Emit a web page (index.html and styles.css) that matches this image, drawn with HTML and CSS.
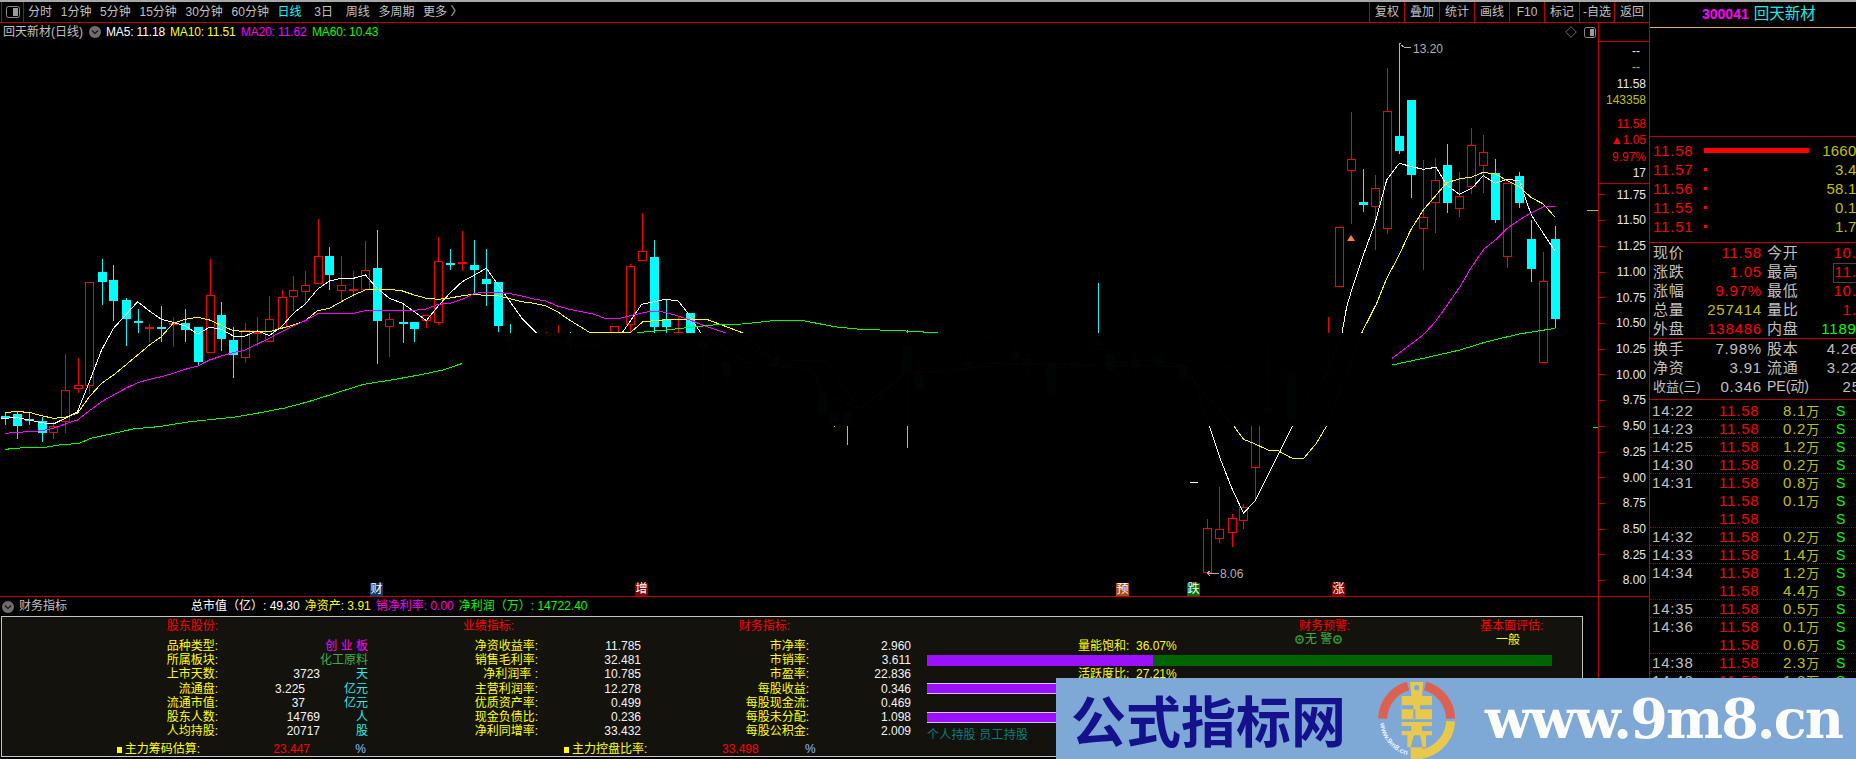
FILE: index.html
```html
<!DOCTYPE html>
<html lang="zh">
<head>
<meta charset="utf-8">
<title>回天新材</title>
<link rel="stylesheet" href="styles.css">
</head>
<body>
<div class="app">
  <div class="topline"></div>
  <div class="main">
    <div class="left">
      <div class="toolbar">
        <div class="tool-icon">
          <svg width="14" height="12" viewBox="0 0 14 12"><rect x="0.5" y="0.5" width="13" height="11" rx="2" fill="none" stroke="#8c8c8c"/><rect x="7" y="2" width="5" height="8" fill="#9a9a9a"/></svg>
        </div>
        <nav class="periods">
          <span>分时</span><span>1分钟</span><span>5分钟</span><span>15分钟</span><span>30分钟</span><span>60分钟</span><span class="active">日线</span><span class="wide">3日</span><span class="wide">周线</span><span>多周期</span><span>更多 〉</span>
        </nav>
        <div class="actions">
          <span>复权</span><span>叠加</span><span>统计</span><span>画线</span><span>F10</span><span>标记</span><span>-自选</span><span>返回</span>
        </div>
      </div>
      <div class="mid">
        <div class="chart-col">
          <div class="chart-head">
            <span class="stock-label">回天新材(日线)</span>
            <svg class="round" width="12" height="12" viewBox="0 0 12 12"><circle cx="6" cy="6" r="6" fill="#6e6e6e"/><path d="M3 4.5 6 7.5 9 4.5" fill="none" stroke="#1c1c1c" stroke-width="1.5"/></svg>
            <span class="ma white">MA5: 11.18</span>
            <span class="ma yellow">MA10: 11.51</span>
            <span class="ma magenta">MA20: 11.62</span>
            <span class="ma green">MA60: 10.43</span>
            <span class="head-gap"></span>
            <svg width="12" height="12" viewBox="0 0 12 12"><path d="M6 .7 11.3 6 6 11.3 .7 6Z" fill="none" stroke="#6a6a6a"/></svg>
            <svg width="12" height="11" viewBox="0 0 12 11"><rect x="0.5" y="0.5" width="11" height="10" rx="2" fill="none" stroke="#8c8c8c"/><rect x="6" y="2" width="4" height="7" fill="#9a9a9a"/></svg>
          </div>
          <div class="plot">
            <svg id="kline" class="kline" width="1598" height="555" viewBox="0 41 1598 555"></svg>
            <span class="tag tag-cai">财</span>
            <span class="tag tag-zeng">增</span>
            <span class="tag tag-yu">预</span>
            <span class="tag tag-die">跌</span>
            <span class="tag tag-zhang">涨</span>
          </div>
        </div>
        <div class="axis">
          <div class="axis-top"></div>
          <div class="readout">
            <div class="dash white-soft">--</div>
            <div class="dash olive">--</div>
            <div class="white-soft">11.58</div>
            <div class="olive">143358</div>
            <div class="red spaced">11.58</div>
            <div class="red">▲1.05</div>
            <div class="red">9.97%</div>
            <div class="white-soft">17</div>
          </div>
          <div class="scale">
            <div class="tick"><i></i><b>11.75</b></div>
            <div class="tick"><i></i><b>11.50</b></div>
            <div class="tick"><i></i><b>11.25</b></div>
            <div class="tick"><i></i><b>11.00</b></div>
            <div class="tick"><i></i><b>10.75</b></div>
            <div class="tick"><i></i><b>10.50</b></div>
            <div class="tick"><i></i><b>10.25</b></div>
            <div class="tick"><i></i><b>10.00</b></div>
            <div class="tick"><i></i><b>9.75</b></div>
            <div class="tick"><i></i><b>9.50</b></div>
            <div class="tick"><i></i><b>9.25</b></div>
            <div class="tick"><i></i><b>9.00</b></div>
            <div class="tick"><i></i><b>8.75</b></div>
            <div class="tick"><i></i><b>8.50</b></div>
            <div class="tick"><i></i><b>8.25</b></div>
            <div class="tick"><i></i><b>8.00</b></div>
          </div>
        </div>
      </div>
      <div class="lower">
        <div class="fin-col">
          <div class="fin-head">
            <svg class="round" width="12" height="12" viewBox="0 0 12 12"><circle cx="6" cy="6" r="6" fill="#6e6e6e"/><path d="M3 4.5 6 7.5 9 4.5" fill="none" stroke="#1c1c1c" stroke-width="1.5"/></svg>
            <span class="fin-title">财务指标</span>
            <span class="white">总市值（亿）: 49.30</span>
            <span class="yellow">净资产: 3.91</span>
            <span class="magenta">销净利率: 0.00</span>
            <span class="green">净利润（万）: 14722.40</span>
          </div>
          <div class="panel">
            <div class="fin-left">
              <div class="frow heads">
                <span class="lab red">股东股份:</span><span></span><span></span>
                <span class="lab red h2">业绩指标:</span><span></span>
                <span class="lab red h3">财务指标:</span><span></span>
              </div>
              <div class="frow">
                <span class="lab">品种类型:</span><span class="val"></span><span class="unit magenta nowrap">创 业 板</span>
                <span class="lab">净资收益率:</span><span class="val">11.785</span>
                <span class="lab">市净率:</span><span class="val">2.960</span>
              </div>
              <div class="frow">
                <span class="lab">所属板块:</span><span class="val"></span><span class="unit leaf nowrap">化工原料</span>
                <span class="lab">销售毛利率:</span><span class="val">32.481</span>
                <span class="lab">市销率:</span><span class="val">3.611</span>
              </div>
              <div class="frow">
                <span class="lab">上市天数:</span><span class="val">3723</span><span class="unit cyan">天</span>
                <span class="lab">净利润率 :</span><span class="val">10.785</span>
                <span class="lab">市盈率:</span><span class="val">22.836</span>
              </div>
              <div class="frow">
                <span class="lab">流通盘:</span><span class="val short">3.225</span><span class="unit cyan">亿元</span>
                <span class="lab">主营利润率:</span><span class="val">12.278</span>
                <span class="lab">每股收益:</span><span class="val">0.346</span>
              </div>
              <div class="frow">
                <span class="lab">流通市值:</span><span class="val short">37</span><span class="unit cyan">亿元</span>
                <span class="lab">优质资产率:</span><span class="val">0.499</span>
                <span class="lab">每股现金流:</span><span class="val">0.469</span>
              </div>
              <div class="frow">
                <span class="lab">股东人数:</span><span class="val">14769</span><span class="unit cyan">人</span>
                <span class="lab">现金负债比:</span><span class="val">0.236</span>
                <span class="lab">每股未分配:</span><span class="val">1.098</span>
              </div>
              <div class="frow">
                <span class="lab">人均持股:</span><span class="val">20717</span><span class="unit cyan">股</span>
                <span class="lab">净利同增率:</span><span class="val">33.432</span>
                <span class="lab">每股公积金:</span><span class="val">2.009</span>
              </div>
              <div class="frow total">
                <span class="lab t-lab"><i class="sq"></i>主力筹码估算:</span><span class="val t-val red">23.447</span><span class="unit t-pct sky">%</span>
                <span></span><span class="t-lab2 yellow"><i class="sq"></i>主力控盘比率:</span>
                <span class="t-val2 red">33.498</span><span class="t-pct2 sky">%</span>
              </div>
            </div>
            <div class="fin-right">
              <div class="fr-top">
                <div class="alert">
                  <div class="red cap">财务预警:</div>
                  <div class="status leaf"><i class="ring"></i>无 警<i class="ring"></i></div>
                </div>
                <div class="evaluate">
                  <div class="red cap">基本面评估:</div>
                  <div class="grade yellow">一般</div>
                </div>
              </div>
              <div class="mrow"><span class="yellow mlabel">量能饱和:&nbsp;&nbsp;36.07%</span></div>
              <div class="mrow"><div class="meter"><div class="fill fill-a"></div></div></div>
              <div class="mrow"><span class="yellow mlabel">活跃度比:&nbsp;&nbsp;27.21%</span></div>
              <div class="mrow"><div class="meter edged"><div class="fill fill-b"></div></div></div>
              <div class="mrow"></div>
              <div class="mrow"><div class="meter edged"><div class="fill fill-c"></div></div></div>
              <div class="mrow"><span class="teal holders">个人持股 员工持股</span></div>
            </div>
          </div>
        </div>
        <div class="axis-blank"></div>
      </div>
    </div>
    <aside class="side">
      <div class="title"><span class="code">300041</span><span class="name">回天新材</span></div>
      <div class="title-gap"></div>
      <div class="book">
        <div class="brow"><span class="red">11.58</span><span class="bar-cell"><i class="bar-full"></i></span><span class="olive vol">16601</span></div>
        <div class="brow"><span class="red">11.57</span><span class="bar-cell"><i class="bar-dot"></i></span><span class="olive vol">3.43</span></div>
        <div class="brow"><span class="red">11.56</span><span class="bar-cell"><i class="bar-dot"></i></span><span class="olive vol">58.15</span></div>
        <div class="brow"><span class="red">11.55</span><span class="bar-cell"><i class="bar-dot"></i></span><span class="olive vol">0.15</span></div>
        <div class="brow"><span class="red">11.51</span><span class="bar-cell"><i class="bar-dot"></i></span><span class="olive vol">1.72</span></div>
      </div>
      <div class="quote">
        <div class="qrow"><span>现价</span><span class="qv red">11.58</span><span>今开</span><span class="qv2 red">10.53</span></div>
        <div class="qrow"><span>涨跌</span><span class="qv red">1.05</span><span>最高</span><span class="qv2 red boxed">11.58</span></div>
        <div class="qrow"><span>涨幅</span><span class="qv red">9.97%</span><span>最低</span><span class="qv2 red">10.35</span></div>
        <div class="qrow"><span>总量</span><span class="qv olive">257414</span><span>量比</span><span class="qv2 red">1.25</span></div>
        <div class="qrow"><span>外盘</span><span class="qv red">138486</span><span>内盘</span><span class="qv2 green">118928</span></div>
      </div>
      <div class="quote quote-b">
        <div class="qrow"><span>换手</span><span class="qv">7.98%</span><span>股本</span><span class="qv2">4.26亿</span></div>
        <div class="qrow"><span>净资</span><span class="qv">3.91</span><span>流通</span><span class="qv2">3.22亿</span></div>
        <div class="qrow"><span class="narrow">收益(三)</span><span class="qv">0.346</span><span class="pe">PE(动)</span><span class="qv2">25.3</span></div>
      </div>
      <div class="ticks">
        <div class="trow"><span class="t">14:22</span><span class="p">11.58</span><span class="v">8.1<em>万</em></span><span class="s">S</span></div>
        <div class="trow sep"><span class="t">14:23</span><span class="p">11.58</span><span class="v">0.2<em>万</em></span><span class="s">S</span></div>
        <div class="trow sep"><span class="t">14:25</span><span class="p">11.58</span><span class="v">1.2<em>万</em></span><span class="s">S</span></div>
        <div class="trow sep"><span class="t">14:30</span><span class="p">11.58</span><span class="v">0.2<em>万</em></span><span class="s">S</span></div>
        <div class="trow sep"><span class="t">14:31</span><span class="p">11.58</span><span class="v">0.8<em>万</em></span><span class="s">S</span></div>
        <div class="trow"><span class="t"></span><span class="p">11.58</span><span class="v">0.1<em>万</em></span><span class="s">S</span></div>
        <div class="trow"><span class="t"></span><span class="p">11.58</span><span class="v"></span><span class="s">S</span></div>
        <div class="trow sep"><span class="t">14:32</span><span class="p">11.58</span><span class="v">0.2<em>万</em></span><span class="s">S</span></div>
        <div class="trow sep"><span class="t">14:33</span><span class="p">11.58</span><span class="v">1.4<em>万</em></span><span class="s">S</span></div>
        <div class="trow sep"><span class="t">14:34</span><span class="p">11.58</span><span class="v">1.2<em>万</em></span><span class="s">S</span></div>
        <div class="trow"><span class="t"></span><span class="p">11.58</span><span class="v">4.4<em>万</em></span><span class="s">S</span></div>
        <div class="trow sep"><span class="t">14:35</span><span class="p">11.58</span><span class="v">0.5<em>万</em></span><span class="s">S</span></div>
        <div class="trow sep"><span class="t">14:36</span><span class="p">11.58</span><span class="v">0.1<em>万</em></span><span class="s">S</span></div>
        <div class="trow"><span class="t"></span><span class="p">11.58</span><span class="v">0.6<em>万</em></span><span class="s">S</span></div>
        <div class="trow sep"><span class="t">14:38</span><span class="p">11.58</span><span class="v">2.3<em>万</em></span><span class="s">S</span></div>
        <div class="trow sep"><span class="t">14:42</span><span class="p">11.58</span><span class="v">1.3<em>万</em></span><span class="s">S</span></div>
      </div>
    </aside>
  </div>
  <div class="watermark">
    <span class="wm-cn">公式指标网</span>
    <svg class="wm-logo" width="100" height="85" viewBox="0 0 300 255">
      <path d="M38 128A104 104 0 0 1 114 30" fill="none" stroke="#dc6150" stroke-width="27"/>
      <path d="M166 30A104 104 0 0 1 242 128" fill="none" stroke="#dc6150" stroke-width="27"/>
      <path d="M242 136A104 104 0 0 1 125 234" fill="none" stroke="#e9c94c" stroke-width="27"/>
      <path d="M120 18H160L156 60H186V130H95V60H124Z" fill="#e9c94c"/>
      <circle cx="140" cy="35" r="8" fill="#7ea8d6"/>
      <path d="M96 88H130V100H96ZM150 88H186V100H150ZM130 100H136V128H130Z" fill="#7ea8d6"/>
      <path d="M95 138H186V150H95ZM95 165H186V178H95ZM112 178H132L122 214H112ZM150 178H168V214H158ZM124 150H156V165H124ZM122 214H158V248H122Z" fill="#e9c94c"/>
      <path d="M132 186H148L150 214H130Z" fill="#7ea8d6"/>
      <path id="wm-arc" d="M30 142A112 112 0 0 0 112 238" fill="none"/>
      <text class="wm-arc-text"><textPath href="#wm-arc">www.9m8.cn</textPath></text>
    </svg>
    <span class="wm-url">www.9m8.cn</span>
  </div>
</div>
<script src="chart.js"></script>
</body>
</html>
```
FILE: styles.css
```css
* { box-sizing: border-box; }
html, body { margin: 0; padding: 0; background: #000; }
body {
  width: 1856px;
  height: 759px;
  overflow: hidden;
  font: 12px/1.2 "Liberation Sans", "Noto Sans CJK SC", sans-serif;
  color: #c0c0c0;
}
.app { position: relative; width: 1856px; height: 759px; overflow: hidden; }
.topline { height: 2px; background: #a8a8a8; }
.main { display: flex; height: 757px; }
.left { width: 1649px; display: flex; flex-direction: column; }

.white { color: #fff; }
.white-soft { color: #e8e8e8; }
.yellow { color: #ff0; }
.magenta { color: #f0f; }
.green { color: #0f0; }
.red { color: #f00; }
.cyan { color: #2ee; }
.olive { color: #c0c000; }
.sky { color: #8cc0ff; }
.leaf { color: #3cb043; }
.teal { color: #008080; }
.nowrap { white-space: nowrap; }

.toolbar { display: flex; height: 21px; border-bottom: 1px solid #c00000; }
.tool-icon {
  width: 23px;
  margin-left: 1px;
  border-left: 1px solid #c00000;
  border-right: 1px solid #c00000;
  display: flex;
  align-items: center;
  justify-content: center;
}
.periods { display: flex; align-items: center; gap: 8.7px; padding-left: 4px; flex: 1; white-space: nowrap; }
.periods .active { color: #0ff; }
.periods .wide { margin-left: 4px; }
.actions { display: flex; }
.actions span {
  width: 35px;
  border-left: 1px solid #c00000;
  display: flex;
  align-items: center;
  justify-content: center;
}

.mid { display: flex; height: 574px; border-bottom: 1px solid #c00000; }
.chart-col { width: 1598px; }
.chart-head { display: flex; align-items: center; height: 18px; padding: 0 2px 0 3px; white-space: nowrap; }
.stock-label { width: 86px; }
.round { margin-right: 5px; flex: none; }
.ma { margin-right: 5px; letter-spacing: -0.15px; min-width: 66px; }
.ma.white { min-width: 59px; margin-right: 5px; }
.head-gap { flex: 1; }
.chart-head svg + svg { margin-left: 7px; }
.plot { position: relative; height: 555px; }
.kline { display: block; }
.kline .hi { font-size: 12px; fill: #b0b0b0; }
.tag {
  position: absolute;
  top: 542px;
  width: 13px;
  height: 13px;
  color: #fff;
  font-size: 12px;
  line-height: 13px;
  text-align: center;
}
.tag-cai { left: 370px; background: #0a3a6e; }
.tag-zeng { left: 635px; background: #860000; }
.tag-yu { left: 1116px; background: #b04a10; }
.tag-die { left: 1187px; background: #007000; }
.tag-zhang { left: 1332px; background: #860000; }

.axis { width: 51px; border-left: 1px solid #c00000; display: flex; flex-direction: column; }
.axis-top { height: 19px; border-bottom: 1px solid #c00000; }
.readout {
  height: 142px;
  padding: 1px 3px 0 0;
  border-bottom: 1px solid #c00000;
  text-align: right;
  line-height: 16.3px;
  white-space: nowrap;
}
.readout .dash { padding-right: 6px; }
.readout .spaced { margin-top: 8px; }
.scale { margin-top: -2px; }
.tick { height: 25.73px; display: flex; align-items: center; justify-content: space-between; padding-right: 3px; }
.tick i { width: 6px; height: 1px; background: #c00000; }
.tick b { font-weight: normal; color: #e8e8e8; }

.lower { display: flex; height: 162px; }
.fin-col { width: 1598px; }
.fin-head { display: flex; align-items: center; height: 19px; padding-left: 2px; gap: 5px; white-space: nowrap; }
.fin-head .round { margin-right: 0; }
.fin-title { width: 172px; margin-left: -5px; padding-left: 5px; }
.panel {
  display: flex;
  width: 1582px;
  height: 141px;
  margin-left: 1px;
  border: 1px solid #c4c4c4;
  background: #14120d;
  color: #ff0;
}
.axis-blank { width: 51px; border-left: 1px solid #c00000; }
.fin-left { width: 909px; }
.frow {
  display: grid;
  grid-template-columns: 216px 102px 48px 170px 103px 168px 102px;
  height: 14.2px;
  align-items: center;
  line-height: 14px;
}
.heads { height: 18px; margin-bottom: 4px; }
.lab { text-align: right; }
.h2 { padding-right: 24px; }
.h3 { padding-right: 19px; }
.val { text-align: right; color: #f2f2f2; }
.val.short { padding-right: 15px; }
.unit { text-align: right; }
.total { margin-top: 3.6px; }
.t-lab { padding-right: 18px; white-space: nowrap; }
.val.t-val { padding-right: 10px; color: #f00; }
.t-pct { padding-right: 2px; }
.t-lab2 { padding-left: 26px; white-space: nowrap; overflow: visible; }
.t-val2 { padding-left: 81px; }
.t-pct2 { margin-left: -4px; }
.sq { display: inline-block; width: 5px; height: 6px; margin-right: 3px; background: #ff0; }

.fin-right { flex: 1; }
.fr-top { display: flex; height: 22px; padding-left: 388px; }
.alert { width: 181px; }
.cap { height: 18px; line-height: 18px; }
.status { display: flex; align-items: center; margin-left: -5px; height: 11px; margin-top: -1px; }
.ring {
  flex: none;
  width: 9px;
  height: 9px;
  margin: 0 1px;
  border: 2px solid #2a8a30;
  border-radius: 50%;
  background: radial-gradient(circle, #2a8a30 0 1px, transparent 1.5px);
}
.grade { margin-left: 16px; height: 14px; margin-top: -2px; font-size: 12px; }
.mrow { height: 14.2px; display: flex; align-items: center; line-height: 14px; }
.mlabel { margin-left: 167px; white-space: nowrap; }
.meter { width: 625px; height: 11px; margin-left: 16px; background: #006400; }
.meter.edged { border-top: 1px solid #d0c8f0; border-bottom: 1px solid #d0c8f0; }
.fill { height: 100%; background: #9a10ff; }
.fill-a { width: 226px; }
.fill-b { width: 300px; }
.fill-c { width: 300px; }
.holders { margin: 8px 0 0 16px; font-size: 12px; letter-spacing: .2px; }

.side { width: 207px; border-left: 1px solid #c00000; overflow: hidden; font-size: 15px; }
.title {
  display: flex;
  align-items: center;
  height: 26px;
  padding-left: 52px;
  border-bottom: 1px solid #d8b060;
}
.code { color: #f0f; font-size: 14px; font-weight: bold; margin-right: 5px; }
.name { color: #1ee; font-size: 15.5px; letter-spacing: 0; white-space: nowrap; }
.title-gap { height: 108px; }
.book { height: 107px; padding-top: 4px; border-top: 1px solid #c00000; border-bottom: 1px solid #c00000; }
.brow { display: flex; align-items: center; height: 19px; padding-left: 3px; letter-spacing: .8px; white-space: nowrap; width: 215px; }
.brow > .red { width: 51px; flex: none; }
.bar-cell { width: 105px; flex: none; display: flex; align-items: center; }
.bar-full { width: 105px; height: 5px; background: #f00; }
.bar-dot { width: 3px; height: 3px; background: #f00; }
.vol { width: 56px; text-align: right; flex: none; letter-spacing: .2px; }
.quote { height: 96px; border-bottom: 1px solid #c00000; }
.quote-b { height: 61px; }
.qrow {
  display: grid;
  grid-template-columns: 32px 77px 38px 75px;
  height: 19px;
  align-items: center;
  padding-left: 3px;
  width: 225px;
  white-space: nowrap;
  letter-spacing: .8px;
}
.qrow > span:nth-child(3) { margin-left: 5px; }
.qv { text-align: right; }
.qv2 { text-align: right; position: relative; }
.boxed::before {
  content: "";
  position: absolute;
  right: -1px;
  top: 0;
  width: 41px;
  height: 18px;
  border: 1px solid #444;
}
.narrow { font-size: 13px; letter-spacing: 0; }
.pe { font-size: 14px; letter-spacing: 0; margin-left: 4px; }
.ticks { padding-top: 1px; }
.trow {
  display: grid;
  grid-template-columns: 67px 64px 53px 20px;
  height: 18px;
  align-items: center;
  padding-left: 2px;
  border-top: 1px solid transparent;
  white-space: nowrap;
  letter-spacing: .8px;
}
.trow.sep { border-top: 1px dotted #a00000; }
.t { color: #c0c0c0; }
.p { color: #f00; }
.v { color: #c0c000; }
.v em { font-style: normal; font-size: 13px; margin-left: 0; letter-spacing: 0; }
.s { color: #0f0; font-size: 14px; }

.watermark {
  position: absolute;
  left: 1056px;
  top: 678px;
  width: 800px;
  height: 81px;
  background: #7ea8d6;
  display: flex;
  align-items: center;
  padding-left: 15px;
  white-space: nowrap;
}
.wm-cn { width: 299px; font: bold 55px/1 "Noto Sans CJK SC", sans-serif; color: #15108c; }
.wm-logo { flex: none; margin-right: 15px; }
.wm-arc-text { font: bold 22px "Liberation Sans", sans-serif; fill: #e8f0fa; }
.wm-url { font: bold 54px/1 "DejaVu Serif", serif; color: #fcfcfc; letter-spacing: -1.9px; }
```
FILE: chart.js
```js
(function () {
  var NS = 'http://www.w3.org/2000/svg';
  var svg = document.getElementById('kline');
  var RED = '#f00', CY = '#0ff';

  function el(name, attrs, text) {
    var e = document.createElementNS(NS, name);
    for (var k in attrs) e.setAttribute(k, attrs[k]);
    if (text) e.textContent = text;
    svg.appendChild(e);
    return e;
  }
  function candle(c) {
    var x = Math.round(c.x), up = c.t === 'r';
    el('rect', { x: x, y: c.wt, width: 1, height: Math.max(c.wb - c.wt, 1), fill: up ? RED : CY, 'shape-rendering': 'crispEdges' });
    if (up) {
      el('rect', { x: x - 4 + 0.5, y: c.a + 0.5, width: 8, height: Math.max(c.b - c.a - 1, 1), fill: '#000', stroke: RED, 'shape-rendering': 'crispEdges' });
    } else {
      el('rect', { x: x - 4, y: c.a, width: 9, height: Math.max(c.b - c.a, 2), fill: CY, 'shape-rendering': 'crispEdges' });
    }
  }
  function load(rows, fx, fy) {
    rows.forEach(function (r) {
      candle({ t: r[0], x: fx(r[1]), a: fy(r[2]), b: fy(r[3]), wt: fy(r[4]), wb: fy(r[5]) });
    });
  }
  var z8x = function (X) { return X / 2.529; }, z8y = function (Y) { return 200 + Y / 3; };
  var z9x = function (X) { return 1180 + X / 3; }, z9y = function (Y) { return 30 + Y / 3; };
  var z10x = function (X) { return 620 + X / 1.96; }, z10y = function (Y) { return 260 + Y / 3; };
  var z11x = function (X) { return 600 + X / 3; }, z11y = function (Y) { return 200 + Y / 3; };
  var c = 'c', r = 'r';

  load([
    [c,13,647,650,640,675],[c,44,643,678,635,717],[c,74,658,663,640,675],[c,105,662,698,650,725],
    [r,135,677,700,665,717],[r,165,571,665,462,700],[r,196,556,568,474,578],[r,226,247,557,247,582],
    [c,257,216,245,178,315],[c,287,240,302,195,362],[c,318,300,356,295,437],[c,348,363,366,328,398],
    [r,378,382,388,372,426],[c,408,381,385,318,426],[r,438,368,375,352,441],[c,469,370,389,328,426],
    [c,500,381,485,381,498],[r,530,286,460,178,460],[c,560,345,416,306,452],[c,590,420,464,382,533],
    [r,620,391,475,370,488],[r,651,395,400,350,438],[r,681,358,427,288,427],[r,712,292,385,270,385],
    [r,742,271,290,228,333],[r,772,256,277,213,315],[r,803,169,253,57,253],[c,833,168,224,141,270],
    [r,863,256,274,168,304],[r,894,268,274,213,290],[r,924,211,269,123,269],[c,954,204,362,90,491],
    [r,985,358,382,340,470],[c,1018,366,371,310,428],[c,1048,366,386,366,426],[r,1078,344,362,344,384],
    [r,1108,184,368,111,374],[c,1139,189,194,148,210],[r,1169,186,190,94,213],[c,1200,195,209,120,278],
    [c,1230,237,251,148,318],[c,1260,246,377,246,396],[c,1290,400,425,373,460],[r,1382,400,440,395,470],
    [r,1412,400,420,375,460],[c,1442,405,425,396,470],[r,1503,400,430,396,470]
  ], z8x, z8y);

  load([
    [r,43,379,440,379,480],[r,91,199,376,192,460],[r,127,154,184,40,184],[c,163,171,380,120,400],
    [c,199,358,380,298,430],[r,235,396,398,350,430],[c,271,339,398,339,440]
  ], z11x, z11y);

  // candles that lie mostly under the dark band in the middle of the chart
  load([
    [c,163,245,265,225,365],[c,208,305,345,290,375],[r,185,310,330,260,340],[c,303,290,315,260,330],
    [c,325,310,325,300,345],[c,395,395,460,370,480],[c,420,460,485,450,500],[c,445,460,498,450,555],
    [c,562,258,330,210,565],[c,585,335,385,300,390],[c,680,305,320,285,340],[c,773,278,292,250,310],
    [c,797,297,318,280,345],[c,845,312,400,305,410],[c,890,305,322,285,345],[c,937,243,258,68,300],
    [c,960,283,330,265,340],[c,1010,298,325,285,340],[c,1055,295,315,285,335],[c,1102,318,358,310,365],
    [c,1268,445,455,258,470],[c,1316,340,480,330,498],[r,1387,340,400,170,440]
  ], z10x, z10y);

  load([
    [r,1151,805,940,778,940],[r,1175,808,836,682,848],[r,1199,775,820,762,862],
    [r,1222,742,784,732,808],[r,1245,400,625,380,720]
  ], z10x, z10y);

  load([
    [r,478,592,772,592,772],[r,514,388,424,246,582],[c,550,516,524,418,546],[r,586,475,532,435,660],
    [r,622,244,598,114,612],[c,658,318,362,38,372],[c,694,210,434,210,504],[r,730,562,596,390,720],
    [r,766,451,520,384,608],[c,802,405,518,342,549],[r,838,499,538,426,560],[r,874,346,470,294,492],
    [r,910,367,409,316,488],[c,946,430,570,388,578],[r,982,460,680,460,714],[c,1018,438,518,426,534],
    [c,1054,627,716,570,756],[r,1090,754,1000,666,1000],[c,1126,627,866,588,895]
  ], z9x, z9y);

  function seg(list, fx, fy) {
    return list.map(function (p) { return fx(p[0]).toFixed(1) + ',' + fy(p[1]).toFixed(1); }).join(' ');
  }
  function line(color, width, parts) {
    el('polyline', { points: parts.join(' '), fill: 'none', stroke: color, 'stroke-width': width, 'shape-rendering': 'crispEdges' });
  }

  line('#fff', 1, [
    seg([[3,655],[44,653],[74,660],[105,668],[135,672],[165,655],[196,635],[226,545],[257,450],[287,385],[318,345],[348,305],[378,333],[408,358],[438,367],[469,378],[500,402],[530,382],[560,388],[590,408],[620,408],[651,392],[681,407],[712,380],[742,340],[772,312],[803,268],[833,243],[863,235],[894,235],[924,225],[954,265],[985,295],[1018,310],[1048,335],[1078,362],[1108,318],[1139,278],[1169,245],[1200,225],[1230,205],[1260,255],[1290,305],[1320,355],[1356,398],[1400,420],[1450,435],[1515,435]], z8x, z8y),
    seg([[67,398],[125,313],[150,308],[195,298],[235,303],[260,335],[302,398]], z11x, z11y),
    seg([[250,310],[330,320],[380,330],[395,400],[470,445],[495,440],[560,330],[640,340],[720,310],[800,310],[880,325],[960,310],[1050,300],[1115,320],[1155,498],[1175,590],[1198,680],[1222,760],[1246,720],[1270,645],[1295,570],[1318,498],[1350,400],[1385,345]], z10x, z10y),
    seg([[486,908],[500,830],[518,770],[548,680],[585,580],[620,450],[658,400],[695,410],[730,418],[768,412],[800,465],[838,493],[875,475],[910,437],[946,460],[982,448],[1018,452],[1054,555],[1090,610],[1124,662]], z9x, z9y)
  ]);

  line('#ff0', 1, [
    seg([[13,637],[44,635],[74,637],[105,647],[135,655],[165,652],[196,640],[226,590],[257,550],[287,525],[318,495],[348,465],[378,435],[408,410],[438,370],[469,358],[500,352],[530,360],[560,376],[590,392],[620,394],[651,394],[681,395],[712,385],[742,375],[772,362],[803,332],[833,325],[863,305],[894,285],[924,270],[954,268],[985,268],[1018,273],[1048,285],[1078,295],[1108,298],[1139,294],[1169,287],[1200,283],[1230,287],[1260,287],[1290,296],[1320,305],[1350,310],[1380,317],[1410,335],[1440,360],[1470,382],[1492,398]], z8x, z8y),
    seg([[20,218],[45,185],[100,178],[170,178],[240,218],[300,300],[400,300],[470,445],[560,340],[800,310],[1100,320],[1203,498],[1222,538],[1245,552],[1270,570],[1290,572],[1316,594],[1340,595],[1365,550],[1385,498],[1455,215]], z10x, z10y),
    seg([[590,820],[620,745],[655,680],[692,600],[730,540],[766,498],[800,458],[838,447],[875,441],[910,427],[946,432],[982,452],[1018,470],[1054,503],[1090,522],[1124,560]], z9x, z9y)
  ]);

  line('#f0f', 1, [
    seg([[13,700],[44,697],[74,695],[105,692],[135,685],[165,672],[196,660],[226,632],[257,605],[287,585],[318,565],[348,548],[378,538],[408,530],[438,520],[469,508],[500,498],[530,480],[560,468],[590,458],[620,450],[651,432],[681,415],[712,395],[742,378],[772,362],[803,342],[833,340],[863,340],[894,340],[924,332],[954,331],[985,331],[1018,331],[1048,331],[1078,327],[1108,313],[1139,310],[1169,298],[1200,280],[1230,277],[1260,277],[1290,281],[1320,288],[1350,297],[1380,303],[1410,318],[1440,328],[1470,335],[1500,342],[1530,355]], z8x, z8y),
    seg([[20,355],[60,355],[100,345],[145,335],[185,335],[225,345],[270,360],[320,380],[375,398]], z11x, z11y),
    seg([[300,300],[900,350]], z10x, z10y),
    seg([[636,985],[730,915],[766,875],[802,825],[840,770],[875,710],[912,657],[946,630],[982,595],[1018,570],[1054,548],[1090,531],[1124,529]], z9x, z9y)
  ]);

  line('#0f0', 1, [
    seg([[13,748],[60,743],[120,741],[150,735],[200,730],[230,715],[280,702],[340,686],[400,680],[480,665],[590,652],[650,640],[720,624],[780,605],[860,575],[920,553],[1000,538],[1060,525],[1120,510],[1170,490]], z8x, z8y),
    seg([[1300,450],[1450,420],[1568,410]], z8x, z8y),
    seg([[40,217],[90,210],[130,203],[195,193],[240,192],[300,182],[360,182],[420,200],[470,208],[550,212],[605,217],[800,240],[1100,300],[1300,345],[1510,318]], z10x, z10y),
    seg([[636,1005],[730,985],[840,960],[920,935],[1018,912],[1126,895]], z9x, z9y)
  ]);

  // dark band across the middle of the chart
  el('rect', { x: 462, y: 333, width: 930, height: 93, fill: '#000', 'fill-opacity': 0.985, 'shape-rendering': 'crispEdges' });

  // price marks and annotations
  function mark(x, y, w, color) {
    el('rect', { x: x, y: y, width: w, height: 1, fill: color, 'shape-rendering': 'crispEdges' });
  }
  mark(1587, 210, 11, '#c0c000');
  mark(1593, 427, 5, '#0f0');
  mark(1190, 482, 8, '#fff');
  el('path', { d: 'M1399 43h2M1399 43v4M1401 45l3 2h7', fill: 'none', stroke: '#b0b0b0', 'shape-rendering': 'crispEdges' });
  el('text', { x: 1413, y: 53, 'class': 'hi' }, '13.20');
  el('path', { d: 'M1219 573h-12M1207 573l3-2M1207 573l3 3', fill: 'none', stroke: '#b0b0b0', 'shape-rendering': 'crispEdges' });
  el('text', { x: 1220, y: 578, 'class': 'hi' }, '8.06');
  el('path', { d: 'M1347 241l4-6 4 6z', fill: '#ff8040' });
})();
```
